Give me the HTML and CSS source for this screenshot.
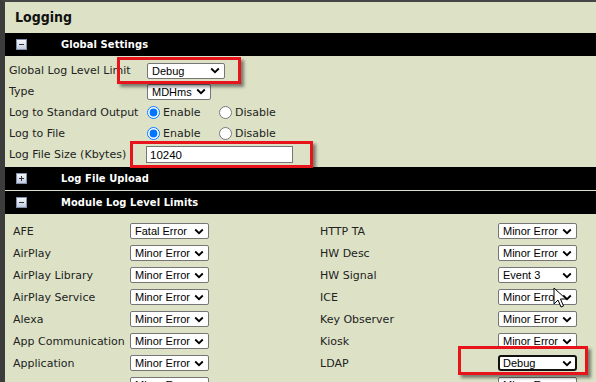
FILE: index.html
```html
<!DOCTYPE html>
<html lang="en">
<head>
<meta charset="UTF-8">
<title>Logging</title>
<link rel="stylesheet" href="styles.css">
</head>
<body>
<div class="page">
    <h1 class="title">Logging</h1>

    <div class="bar"><span class="toggle minus"></span><span class="bar-text">Global Settings</span></div>
    <div class="settings">
        <div class="row">
            <span class="label">Global Log Level Limit</span>
            <select class="sel sel-debug"><option>Debug</option></select>
        </div>
        <div class="row">
            <span class="label">Type</span>
            <select class="sel sel-type"><option>MDHms</option></select>
        </div>
        <div class="row">
            <span class="label">Log to Standard Output</span>
            <label class="radio"><input type="radio" name="std" checked> Enable</label>
            <label class="radio"><input type="radio" name="std"> Disable</label>
        </div>
        <div class="row">
            <span class="label">Log to File</span>
            <label class="radio"><input type="radio" name="file" checked> Enable</label>
            <label class="radio"><input type="radio" name="file"> Disable</label>
        </div>
        <div class="row">
            <span class="label">Log File Size (Kbytes)</span>
            <input class="text" type="text" value="10240">
        </div>
    </div>

    <div class="bar"><span class="toggle plus"></span><span class="bar-text">Log File Upload</span></div>
    <div class="bar gap"><span class="toggle minus"></span><span class="bar-text">Module Log Level Limits</span></div>

    <div class="modules">
        <span class="label">AFE</span><select class="sel"><option>Fatal Error</option></select>
        <span class="label">HTTP TA</span><select class="sel"><option>Minor Error</option></select>

        <span class="label">AirPlay</span><select class="sel"><option>Minor Error</option></select>
        <span class="label">HW Desc</span><select class="sel"><option>Minor Error</option></select>

        <span class="label">AirPlay Library</span><select class="sel"><option>Minor Error</option></select>
        <span class="label">HW Signal</span><select class="sel"><option>Event 3</option></select>

        <span class="label">AirPlay Service</span><select class="sel"><option>Minor Error</option></select>
        <span class="label">ICE</span><select class="sel"><option>Minor Error</option></select>

        <span class="label">Alexa</span><select class="sel"><option>Minor Error</option></select>
        <span class="label">Key Observer</span><select class="sel"><option>Minor Error</option></select>

        <span class="label">App Communication</span><select class="sel"><option>Minor Error</option></select>
        <span class="label">Kiosk</span><select class="sel"><option>Minor Error</option></select>

        <span class="label">Application</span><select class="sel"><option>Minor Error</option></select>
        <span class="label">LDAP</span><select class="sel focus"><option>Debug</option></select>

        <span class="label"></span><select class="sel"><option>Minor Error</option></select>
        <span class="label"></span><select class="sel"><option>Minor Error</option></select>
    </div>

    <!-- annotation boxes -->
    <div class="mark mark-1"></div>
    <div class="mark mark-2"></div>
    <div class="mark mark-3"></div>

    <svg class="cursor" width="14" height="22" viewBox="0 0 14 22">
        <path d="M1 1 L1 17 L5 13 L8 20 L10.5 19 L7.5 12 L13 12 Z" fill="#fff" stroke="#000" stroke-width="1" stroke-linejoin="round"/>
    </svg>
</div>
</body>
</html>
```

FILE: styles.css
```css
html, body {
    margin: 0;
    padding: 0;
}
body {
    background-color: #dde2c6;
    font-family: "DejaVu Sans", Verdana, sans-serif;
    font-size: 11px;
    color: #222;
    overflow: hidden;
}
.page {
    position: relative;
    min-height: 382px;
    border-top: 2px solid #454545;
    border-left: 5px solid #3c3c3c;
}
.title {
    margin: 0;
    height: 31px;
    line-height: 31px;
    padding-left: 10px;
    font-family: "DejaVu Sans Condensed", "DejaVu Sans", sans-serif;
    font-size: 14px;
    font-weight: bold;
    color: #111;
}
.bar {
    display: flex;
    align-items: center;
    height: 23px;
    padding-left: 11px;
    background-color: #000;
    color: #fff;
}
.bar.gap {
    margin-top: 1px;
}
.bar-text {
    font-family: "DejaVu Sans Condensed", "DejaVu Sans", sans-serif;
    font-size: 11px;
    font-weight: bold;
    margin-left: 34px;
    letter-spacing: 0.1px;
}
.toggle {
    position: relative;
    box-sizing: border-box;
    width: 11px;
    height: 11px;
    border: 1px solid #8090a8;
    background: linear-gradient(#f4f6fb, #c2cce0);
    margin-top: -1px;
}
.toggle::before,
.toggle.plus::after {
    content: "";
    position: absolute;
    background: #333;
}
.toggle::before {
    left: 2px;
    top: 4px;
    width: 5px;
    height: 1px;
}
.toggle.plus::after {
    left: 4px;
    top: 2px;
    width: 1px;
    height: 5px;
}
.settings {
    padding: 4px 0 2px 4px;
}
.row {
    display: flex;
    align-items: center;
    height: 21px;
}
.row .label {
    width: 138px;
    flex: none;
}
.sel {
    -webkit-appearance: none;
    appearance: none;
    box-sizing: border-box;
    height: 16px;
    width: 79px;
    padding: 0 0 0 4px;
    font-family: "Liberation Sans", Arial, sans-serif;
    font-size: 11px;
    color: #000;
    background: #fff url("data:image/svg+xml;utf8,<svg xmlns='http://www.w3.org/2000/svg' width='10' height='7' viewBox='0 0 10 7'><path d='M1.2 1.5 L5 5.2 L8.8 1.5' fill='none' stroke='%23000' stroke-width='1.8'/></svg>") no-repeat right 4px center;
    border: 1px solid #767676;
    border-radius: 2px;
}
.sel-debug {
    width: 78px;
}
.sel-type {
    width: 64px;
}
.sel.focus {
    border: 2px solid #111;
    border-radius: 3px;
    padding-left: 3px;
    background-position: right 3px center;
}
.radio {
    display: flex;
    align-items: center;
    width: 72px;
}
.radio input {
    margin: 0 3px 0 0;
    width: 13px;
    height: 13px;
}
.text {
    box-sizing: border-box;
    width: 147px;
    height: 17px;
    margin-left: -1px;
    padding: 0 3px;
    font-family: "Liberation Sans", Arial, sans-serif;
    font-size: 11.5px;
    border: 1px solid #767676;
    background: #fff;
}
.modules {
    display: grid;
    grid-template-columns: 117px 190px 178px 79px;
    grid-auto-rows: 22px;
    align-items: center;
    padding: 6px 0 0 8px;
}
.mark {
    position: absolute;
    border: 3px solid #e8141c;
    box-shadow: 3px 3px 3px rgba(0, 0, 0, 0.45);
}
.mark-1 {
    left: 112px;
    top: 55px;
    width: 118px;
    height: 21px;
}
.mark-2 {
    left: 125px;
    top: 139px;
    width: 177px;
    height: 21px;
}
.mark-3 {
    left: 453px;
    top: 344px;
    width: 124px;
    height: 23px;
}
.cursor {
    position: absolute;
    left: 548px;
    top: 285px;
}
```
